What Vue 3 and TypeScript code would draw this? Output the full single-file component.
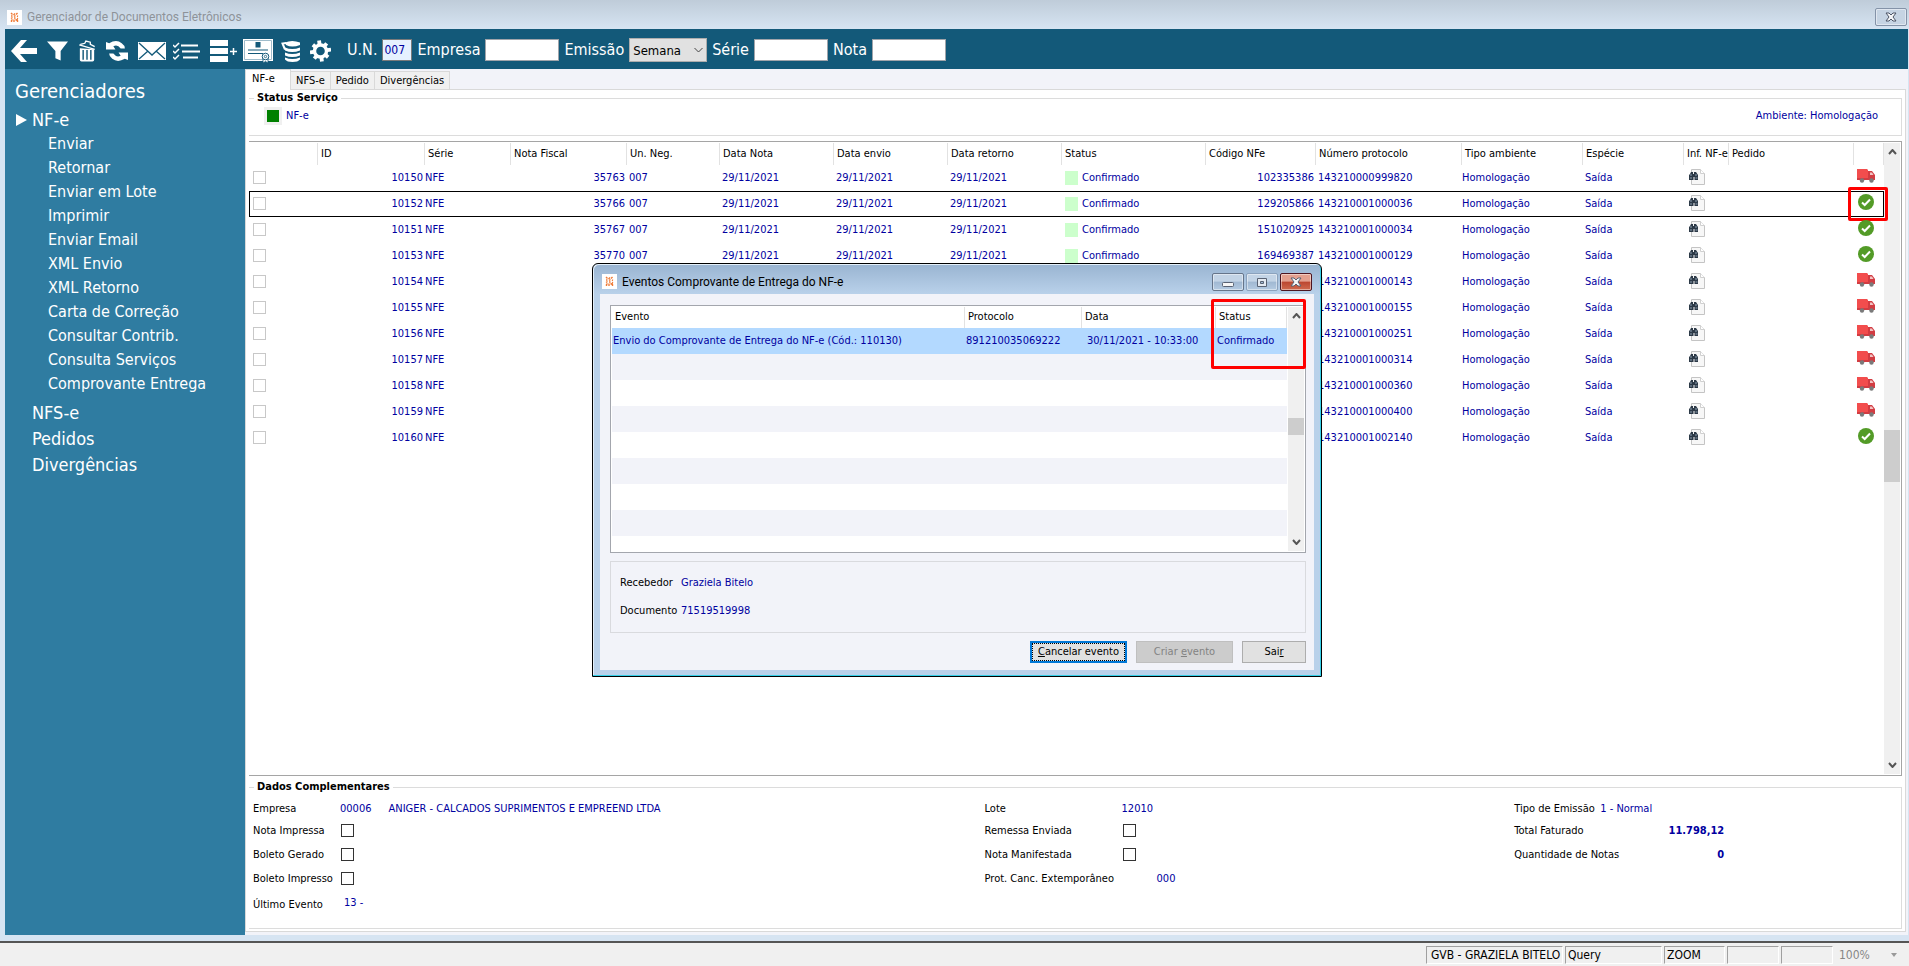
<script setup lang="ts">
import { ref } from 'vue'

interface Column {
  key: string
  label: string
  width: number | null
}

interface Invoice {
  id: number
  protocol: string
  delivered: boolean
  note?: number
  unit?: string
  date?: string
  status?: string
  code?: string
}

const columns: Column[] = [
  { key: 'check', label: '', width: 69 },
  { key: 'id', label: 'ID', width: 107 },
  { key: 'serie', label: 'Série', width: 86 },
  { key: 'note', label: 'Nota Fiscal', width: 116 },
  { key: 'unit', label: 'Un. Neg.', width: 93 },
  { key: 'date', label: 'Data Nota', width: 114 },
  { key: 'sent', label: 'Data envio', width: 114 },
  { key: 'back', label: 'Data retorno', width: 114 },
  { key: 'status', label: 'Status', width: 144 },
  { key: 'code', label: 'Código NFe', width: 110 },
  { key: 'protocol', label: 'Número protocolo', width: 146 },
  { key: 'env', label: 'Tipo ambiente', width: 121 },
  { key: 'kind', label: 'Espécie', width: 101 },
  { key: 'info', label: 'Inf. NF-e', width: 45 },
  { key: 'order', label: 'Pedido', width: null },
  { key: 'delivery', label: '', width: 30 },
]

const eventColumns: Column[] = [
  { key: 'event', label: 'Evento', width: null },
  { key: 'protocol', label: 'Protocolo', width: 117 },
  { key: 'date', label: 'Data', width: 134 },
  { key: 'status', label: 'Status', width: 71 },
]

const issued = { unit: '007', date: '29/11/2021', status: 'Confirmado' }

const invoices: Invoice[] = [
  { id: 10150, note: 35763, code: '102335386', protocol: '143210000999820', delivered: false, ...issued },
  { id: 10152, note: 35766, code: '129205866', protocol: '143210001000036', delivered: true, ...issued },
  { id: 10151, note: 35767, code: '151020925', protocol: '143210001000034', delivered: true, ...issued },
  { id: 10153, note: 35770, code: '169469387', protocol: '143210001000129', delivered: true, ...issued },
  { id: 10154, protocol: '143210001000143', delivered: false },
  { id: 10155, protocol: '143210001000155', delivered: false },
  { id: 10156, protocol: '143210001000251', delivered: false },
  { id: 10157, protocol: '143210001000314', delivered: false },
  { id: 10158, protocol: '143210001000360', delivered: false },
  { id: 10159, protocol: '143210001000400', delivered: false },
  { id: 10160, protocol: '143210001002140', delivered: true },
]

const selectedId = ref(10152)

const actions = [
  'Enviar',
  'Retornar',
  'Enviar em Lote',
  'Imprimir',
  'Enviar Email',
  'XML Envio',
  'XML Retorno',
  'Carta de Correção',
  'Consultar Contrib.',
  'Consulta Serviços',
  'Comprovante Entrega',
]
const managers = ['NFS-e', 'Pedidos', 'Divergências']
const tabs = ['NF-e', 'NFS-e', 'Pedido', 'Divergências']
const activeTab = ref('NF-e')

const unit = ref('007')
const company = ref('')
const period = ref('Semana')
const series = ref('')
const note = ref('')

function colStyle(c: Column) {
  return c.width === null ? undefined : { width: c.width + 'px' }
}
</script>

<template>
  <div class="desktop">
    <header class="titlebar">
      <svg class="logo" viewBox="0 0 15 15" aria-hidden="true">
        <rect width="15" height="15" fill="#fff" />
        <path d="M4 3l1.500 1.500M8 3.500L6.500 5M10.500 3L9 4.500M4 6h1.500M7 6.500L8.500 5.500M10 6l1 .5M4 8.500L5.500 7.500M7 8h1.500M10 8.500l1 .5M4.500 12v-1.500l1-1M7 12V9.500M8.500 9.500L10.500 10.500V12" fill="none" stroke="#ef7a35" stroke-width="1.400" />
      </svg>
      <h1>Gerenciador de Documentos Eletrônicos</h1>
      <button class="win-btn idle" type="button" aria-label="Fechar">
        <svg viewBox="0 0 12 10"><path d="M1 1h3l2 2 2-2h3L8 5l3 4H8L6 7 4 9H1l3-4z" fill="#f4f6f8" stroke="#4d5566" /></svg>
      </button>
    </header>

    <div class="toolbar">
      <div class="tools">
        <button type="button" class="tool back" aria-label="Voltar">
          <svg viewBox="0 0 26 22"><path d="M0 11L10 0h6L9 8h17v6H9l7 8h-6z" /></svg>
        </button>
        <button type="button" class="tool" aria-label="Filtrar">
          <svg viewBox="0 0 20 18"><path d="M0 0h20l-7 9v9l-5-2V9z" /></svg>
        </button>
        <button type="button" class="tool trash" aria-label="Excluir">
          <svg viewBox="0 0 16 20">
            <path d="M2 4l4-1 1-2 4 1v2l4 2M1 4.500l14 4" fill="none" stroke="#fff" stroke-width="1.200" />
            <path d="M1.500 7.500l13 1V18q0 1.500-1.500 1.500H3q-1.500 0-1.500-1.500z" />
            <path d="M4.500 9v9M8 9v9M11.500 9v9" stroke="#135979" stroke-width="1.300" />
          </svg>
        </button>
        <button type="button" class="tool refresh" aria-label="Atualizar">
          <svg viewBox="0 0 21 19">
            <path d="M0 1l3 1q7-4 12 0 3 2 3 5h-4q-3-4-7-2l2 3H0z" />
            <path d="M21 18l-3-1q-7 4-12 0-3-2-3-5h4q3 4 7 2l-2-3h9z" />
          </svg>
        </button>
        <button type="button" class="tool mail" aria-label="Email">
          <svg viewBox="0 0 28 18">
            <path d="M0 0h28v18H0z" />
            <path d="M1 1l13 12L27 1M1 17l9-8M27 17l-9-8" fill="none" stroke="#135979" stroke-width="1.300" />
          </svg>
        </button>
        <button type="button" class="tool list" aria-label="Lista">
          <svg viewBox="0 0 27 18" fill="none">
            <path d="M8 3.500h17M9 9.500h18M10 15.500h15" stroke="#fff" stroke-width="2" />
            <path d="M0 3l2 2 4-4M0 9l2 2 4-4M0 15l2 2 4-4" stroke="#fff" stroke-width="1.500" fill="none" />
          </svg>
        </button>
        <button type="button" class="tool rows" aria-label="Adicionar">
          <svg viewBox="0 0 27 22">
            <path d="M0 0h18v6H0zM0 8h18v6H0zM0 16h18v6H0z" />
            <path d="M20 11.500h7M23.500 8v7" stroke="#fff" stroke-width="1.500" />
          </svg>
        </button>
        <button type="button" class="tool cert" aria-label="Certificado">
          <svg viewBox="0 0 30 24">
            <path d="M0 0h30v22H0z" />
            <path d="M1.500 1.500h27v19h-27z" fill="none" stroke="#9fbccb" />
            <path d="M12.500 3h5v5.500h-5zM5 10.500h20v1H5zM5 14h15v1H5z" fill="#135979" />
            <path d="M20 19v5l2.500-1.500L25 24v-5" stroke="#135979" stroke-width=".8" />
            <circle cx="22.500" cy="17.500" r="3.300" stroke="#135979" />
            <circle cx="22.500" cy="17.500" r="1.200" fill="#fff" stroke="#135979" stroke-width=".8" />
          </svg>
        </button>
        <button type="button" class="tool db" aria-label="Banco de dados">
          <svg viewBox="0 0 21 22">
            <path d="M4 2.500Q11-.5 19 2.500V5Q11 8 5 5z" />
            <path d="M5 3L1.500 3.500 4 9.500" fill="none" stroke="#fff" stroke-width="2" />
            <path d="M4 7.500q7 3 15 0v3q-8 3-15 0zM4 12.500q7 3 15 0v3q-8 3-15 0zM4 17.500q7 3 15 0v2q-2 2.500-7.500 2.500T4 19.500z" />
          </svg>
        </button>
        <button type="button" class="tool gear" aria-label="Configurações">
          <svg viewBox="0 0 22 22">
            <circle cx="11" cy="11" r="6.300" fill="none" stroke="#fff" stroke-width="3.600" />
            <path d="M9.500 0l.5 4M12.500 22l-.5-4M0 12.500l4-.5M22 9.500l-4 .5M3 4.500L6 7M16 15l3 2.500M4.500 19L7 16M15 6l2.500-3" stroke="#fff" stroke-width="4" />
          </svg>
        </button>
      </div>
      <form class="filters" @submit.prevent>
        <label for="f-unit">U.N.</label>
        <input id="f-unit" v-model="unit" class="unit" type="text" />
        <label for="f-company">Empresa</label>
        <input id="f-company" v-model="company" type="text" />
        <label for="f-period">Emissão</label>
        <span class="select-wrap">
          <select id="f-period" v-model="period">
            <option>Semana</option>
            <option>Mês</option>
          </select>
          <svg viewBox="0 0 9 6" aria-hidden="true"><path d="M.5 1l4 4 4-4" fill="none" stroke="#444" /></svg>
        </span>
        <label for="f-series">Série</label>
        <input id="f-series" v-model="series" type="text" />
        <label for="f-note">Nota</label>
        <input id="f-note" v-model="note" type="text" />
      </form>
    </div>

    <div class="workspace">
      <nav class="sidebar">
        <h2>Gerenciadores</h2>
        <a class="group open" href="#">NF-e</a>
        <ul>
          <li v-for="a in actions" :key="a"><a href="#">{{ a }}</a></li>
        </ul>
        <a v-for="m in managers" :key="m" class="group" href="#">{{ m }}</a>
      </nav>

      <main class="content">
        <div class="tabs" role="tablist">
          <button
            v-for="t in tabs"
            :key="t"
            type="button"
            role="tab"
            class="tab"
            :class="{ active: t === activeTab }"
            :aria-selected="t === activeTab"
            @click="activeTab = t"
          >{{ t }}</button>
        </div>

        <div class="panel">
          <fieldset class="service">
            <legend>Status Serviço</legend>
            <div class="service-row">
              <span class="lamp"></span>
              <span>NF-e</span>
              <span class="ambient">Ambiente: Homologação</span>
            </div>
          </fieldset>

          <section class="grid">
            <div class="grid-body">
              <table>
                <colgroup>
                  <col v-for="c in columns" :key="c.key" :style="colStyle(c)" />
                </colgroup>
                <thead>
                  <tr>
                    <th v-for="c in columns" :key="c.key" scope="col"><div>{{ c.label }}</div></th>
                  </tr>
                </thead>
                <tbody>
                  <tr
                    v-for="r in invoices"
                    :key="r.id"
                    :class="{ selected: r.id === selectedId }"
                    @click="selectedId = r.id"
                  >
                    <td><input type="checkbox" :aria-label="'Selecionar ' + r.id" /></td>
                    <td class="num">{{ r.id }}</td>
                    <td>NFE</td>
                    <td class="num">{{ r.note }}</td>
                    <td class="pad">{{ r.unit }}</td>
                    <td class="pad">{{ r.date }}</td>
                    <td class="pad">{{ r.date }}</td>
                    <td class="pad">{{ r.date }}</td>
                    <td><span v-if="r.status" class="state"><i class="swatch"></i>{{ r.status }}</span></td>
                    <td class="num">{{ r.code }}</td>
                    <td class="pad">{{ r.protocol }}</td>
                    <td>Homologação</td>
                    <td class="pad">Saída</td>
                    <td>
                      <svg class="doc" viewBox="0 0 16 16" aria-hidden="true">
                        <path d="M2.500 .5h9l4 4v11h-13z" fill="#f7f7f7" stroke="#c4c4c4" />
                        <path d="M11.500 .5v4h4" fill="#fff" stroke="#d0d0d0" />
                        <path d="M1 5l1-2h2v2h1V3h2l2 3v5H5.500V8h-1v3H0V6z" fill="#2c3947" />
                        <path d="M1 9h2M6.500 9h2M2 5v2M7 5v2" stroke="#8ca0b2" />
                      </svg>
                    </td>
                    <td></td>
                    <td class="delivery">
                      <svg v-if="r.delivered" class="check" viewBox="0 0 16 16" aria-hidden="true">
                        <circle cx="8" cy="8" r="8" fill="#539b27" />
                        <path d="M4 8.500L6.700 11 12 5.500" fill="none" stroke="#fff" stroke-width="2" />
                      </svg>
                      <svg v-else class="truck" viewBox="0 0 18 14" aria-hidden="true">
                        <path d="M0 0h10l1 1v9H0z" fill="#f24d4d" />
                        <path d="M11 2h4l3 4v5h-7zM0 9h11v2H0z" fill="#d23c42" />
                        <path d="M13 3.500h2l1.500 2.500H13z" fill="#f3c3c3" />
                        <circle cx="5" cy="11.500" r="2.200" fill="#7a7a7a" />
                        <circle cx="14.500" cy="11.500" r="2.200" fill="#7a7a7a" />
                      </svg>
                      <span v-if="r.id === 10152" class="mark"></span>
                    </td>
                  </tr>
                </tbody>
              </table>
            </div>
            <div class="scroll" aria-hidden="true">
              <svg viewBox="0 0 9 6"><path d="M1 5l3.500-4L8 5" fill="none" stroke="#555" stroke-width="2" /></svg>
              <span class="thumb"></span>
              <svg viewBox="0 0 9 6"><path d="M1 1l3.500 4L8 1" fill="none" stroke="#555" stroke-width="2" /></svg>
            </div>
          </section>

          <fieldset class="extra">
            <legend>Dados Complementares</legend>
            <div class="cols">
              <div class="fields first">
                <span>Empresa</span><span class="val">00006<span class="name">ANIGER - CALCADOS SUPRIMENTOS E EMPREEND LTDA</span></span>
                <label for="c1">Nota Impressa</label><input id="c1" type="checkbox" />
                <label for="c2">Boleto Gerado</label><input id="c2" type="checkbox" />
                <label for="c3">Boleto Impresso</label><input id="c3" type="checkbox" />
                <span>Último Evento</span><span class="val event">13 -</span>
              </div>
              <div class="fields second">
                <span>Lote</span><span class="val">12010</span>
                <label for="c4">Remessa Enviada</label><input id="c4" type="checkbox" />
                <label for="c5">Nota Manifestada</label><input id="c5" type="checkbox" />
                <span>Prot. Canc. Extemporâneo</span><span class="val prot">000</span>
              </div>
              <div class="fields third">
                <span>Tipo de Emissão</span><span class="val">1 - Normal</span>
                <span>Total Faturado</span><b class="val">11.798,12</b>
                <span>Quantidade de Notas</span><b class="val">0</b>
              </div>
            </div>
          </fieldset>
        </div>
      </main>
    </div>

    <footer class="statusbar">
      <span class="cell user">GVB - GRAZIELA BITELO</span>
      <span class="cell query">Query</span>
      <span class="cell zoom">ZOOM</span>
      <span class="cell blank"></span>
      <span class="cell blank"></span>
      <span class="percent">100%</span>
      <svg viewBox="0 0 6 4" aria-hidden="true"><path d="M0 0h6L3 4z" fill="#999" /></svg>
    </footer>

    <section class="dialog" role="dialog" aria-labelledby="dlg-title">
      <div class="dialog-title">
        <svg class="logo" viewBox="0 0 15 15" aria-hidden="true">
          <rect width="15" height="15" fill="#fff" />
          <path d="M4 3l1.500 1.500M8 3.500L6.500 5M10.500 3L9 4.500M4 6h1.500M7 6.500L8.500 5.500M10 6l1 .5M4 8.500L5.500 7.500M7 8h1.500M10 8.500l1 .5M4.500 12v-1.500l1-1M7 12V9.500M8.500 9.500L10.500 10.500V12" fill="none" stroke="#ef7a35" stroke-width="1.400" />
        </svg>
        <h2 id="dlg-title">Eventos Comprovante de Entrega do NF-e</h2>
        <button class="win-btn" type="button" aria-label="Minimizar">
          <svg viewBox="0 0 12 10"><rect x=".5" y="5.500" width="11" height="4" rx="1" fill="#f6f6f6" stroke="#596273" /></svg>
        </button>
        <button class="win-btn soft" type="button" aria-label="Maximizar">
          <svg viewBox="0 0 12 10"><path d="M1.500 1.500h9v8h-9zM4.500 4.500v2h3v-2z" fill="#e4eaf1" fill-rule="evenodd" stroke="#596273" /></svg>
        </button>
        <button class="win-btn close" type="button" aria-label="Fechar">
          <svg viewBox="0 0 12 10"><path d="M1 1h3l2 2 2-2h3L8 5l3 4H8L6 7 4 9H1l3-4z" fill="#f4f6f8" stroke="#596273" /></svg>
        </button>
      </div>
      <div class="dialog-body">
        <div class="events">
          <div class="event-body">
            <table>
              <colgroup>
                <col v-for="c in eventColumns" :key="c.key" :style="colStyle(c)" />
              </colgroup>
              <thead>
                <tr>
                  <th v-for="c in eventColumns" :key="c.key" scope="col"><div>{{ c.label }}</div></th>
                </tr>
              </thead>
              <tbody>
                <tr class="current">
                  <td>Envio do Comprovante de Entrega do NF-e (Cód.: 110130)</td>
                  <td>891210035069222</td>
                  <td class="when">30/11/2021 - 10:33:00</td>
                  <td>Confirmado</td>
                </tr>
              </tbody>
            </table>
          </div>
          <div class="scroll" aria-hidden="true">
            <svg viewBox="0 0 9 6"><path d="M1 5l3.500-4L8 5" fill="none" stroke="#555" stroke-width="2" /></svg>
            <span class="thumb"></span>
            <svg viewBox="0 0 9 6"><path d="M1 1l3.500 4L8 1" fill="none" stroke="#555" stroke-width="2" /></svg>
          </div>
          <span class="mark"></span>
        </div>
        <dl class="receiver">
          <dt>Recebedor</dt><dd>Graziela Bitelo</dd>
          <dt>Documento</dt><dd>71519519998</dd>
        </dl>
        <div class="buttons">
          <button type="button" class="btn primary"><span><u>C</u>ancelar evento</span></button>
          <button type="button" class="btn" disabled><span>Criar <u>e</u>vento</span></button>
          <button type="button" class="btn small"><span>Sai<u>r</u></span></button>
        </div>
      </div>
    </section>
  </div>
</template>

<style>
body {
  margin: 0;
  background: #d6e4f2;
}
</style>

<style scoped>
* {
  box-sizing: border-box;
}

.desktop {
  position: relative;
  display: flex;
  flex-direction: column;
  min-height: 100vh;
  background: #d6e4f2;
  font-family: "DejaVu Sans Condensed", "Noto Sans", sans-serif;
  font-size: 11px;
  line-height: 14px;
  color: #000;
}

h1,
h2 {
  margin: 0;
  font-weight: 400;
}

button,
input,
select {
  font-family: inherit;
}

a {
  color: inherit;
  text-decoration: none;
}

.titlebar {
  display: flex;
  align-items: center;
  height: 29px;
  padding: 5px 2px 0 7px;
  background: linear-gradient(#bfccd9, #d6e4f2);
}

.titlebar h1 {
  flex: 1;
  margin-left: 5px;
  font: 12px/16px Roboto, "Noto Sans", sans-serif;
  color: #8e9399;
}

.logo {
  width: 15px;
  height: 15px;
}

.win-btn {
  display: flex;
  align-items: center;
  justify-content: center;
  width: 32px;
  height: 18px;
  padding: 0;
  border: 1px solid #66758a;
  border-radius: 2px;
  background: linear-gradient(#c3d4e6 45%, #a0b8d2 50%, #b5cbe2);
  box-shadow: inset 0 0 0 1px rgba(255, 255, 255, 0.45);
}

.win-btn svg {
  width: 12px;
  height: 10px;
}

.win-btn.idle {
  border-color: #8493a8;
  background: #c6d4e3;
}

.win-btn.soft {
  border-color: #8ba2bd;
}

.win-btn.close {
  border-color: #4d1520;
  background: linear-gradient(#e3a08f 45%, #bb4630 50%, #cf6a4f);
}

.toolbar {
  display: flex;
  align-items: center;
  gap: 16px;
  height: 40px;
  margin: 0 1px 0 5px;
  padding: 4px 0 0 6px;
  background: #135979;
}

.tools {
  display: flex;
  align-items: center;
  gap: 10px;
}

.tool {
  width: 21px;
  height: 22px;
  padding: 0;
  border: 0;
  background: none;
}

.tool svg {
  display: block;
  width: 100%;
  height: 100%;
  fill: #fff;
}

.tool.back { width: 26px; }
.tool.trash { width: 18px; }
.tool.refresh { width: 22px; }
.tool.mail { width: 28px; }
.tool.list { width: 27px; margin-left: -3px; }
.tool.rows { width: 27px; }
.tool.cert { width: 30px; height: 24px; margin-left: -4px; }
.tool.db { margin-left: -2px; }
.tool.gear { margin-left: -2px; }

.filters {
  display: flex;
  align-items: center;
  gap: 5px;
  margin-bottom: 2px;
}

.filters label {
  font-size: 16px;
  line-height: 20px;
  color: #fff;
}

.filters input {
  width: 74px;
  height: 22px;
  padding: 0 1px;
  border: 1px solid #a0a4aa;
  background: #fff;
  font-size: 12px;
  color: #0000a0;
}

.filters .unit {
  width: 30px;
  border-color: #7a7a7a;
  background: #e5f1ff;
}

.select-wrap {
  display: flex;
  align-items: center;
  position: relative;
}

.select-wrap select {
  appearance: none;
  width: 78px;
  height: 24px;
  padding: 0 3px;
  border: 1px solid #adadad;
  border-radius: 0;
  background: #e1e1e1;
  font-size: 13px;
  color: #000;
}

.select-wrap svg {
  position: absolute;
  right: 4px;
  width: 9px;
  height: 6px;
  pointer-events: none;
}

.workspace {
  display: flex;
  flex: 1;
  margin: 0 1px 6px 5px;
}

.sidebar {
  width: 240px;
  padding: 10px 0 0 10px;
  background: #2f7ca1;
  color: #fff;
}

.sidebar h2 {
  margin-bottom: 5px;
  font-size: 20px;
  line-height: 24px;
}

.sidebar ul {
  margin: 0 0 4px;
  padding: 0;
  list-style: none;
}

.sidebar li {
  height: 24px;
  padding-left: 33px;
  font-size: 16px;
  line-height: 24px;
}

.group {
  display: flex;
  align-items: center;
  height: 26px;
  padding-left: 17px;
  font-size: 18px;
}

.group.open {
  height: 24px;
  padding-left: 0;
}

.group.open::before {
  content: "";
  margin: 0 5px 0 1px;
  border: 6px solid transparent;
  border-left: 11px solid #fff;
  border-right: 0;
}

.content {
  display: flex;
  flex: 1;
  flex-direction: column;
  min-width: 0;
  padding: 0 2px 3px 0;
  background: #f2f3f9;
}

.tabs {
  display: flex;
  align-items: flex-end;
  height: 21px;
}

.tab {
  height: 19px;
  margin-right: -1px;
  padding: 0 5px;
  border: 1px solid #d9d9d9;
  background: #f0f0f0;
  font-size: 11px;
  line-height: 14px;
  color: #000;
}

.tab.active {
  z-index: 1;
  width: 46px;
  height: 21px;
  padding: 0 6px 2px;
  border-bottom: 0;
  background: #fff;
  text-align: left;
}

.panel {
  display: flex;
  flex: 1;
  flex-direction: column;
  margin-top: -1px;
  padding: 2px 3px;
  border: 1px solid #d9d9d9;
  background: #fff;
}

fieldset {
  min-width: 0;
  margin: 0;
  border: 1px solid #dcdcdc;
  border-left: 0;
}

legend {
  margin-left: 5px;
  padding: 0 3px;
  font-weight: 700;
  line-height: 12px;
}

.service {
  height: 44px;
  padding: 0;
}

.service-row {
  display: flex;
  align-items: center;
  gap: 4px;
  padding: 3px 23px 0 15px;
  color: #0000a0;
}

.lamp {
  width: 18px;
  height: 18px;
  border: 3px solid #f0f0f0;
  background: #008000;
}

.ambient {
  margin-left: auto;
}

.grid {
  display: flex;
  flex: 1;
  margin: 5px 0;
  border: 1px solid #a5a5a5;
  border-left: 0;
}

.grid-body,
.event-body {
  flex: 1;
  min-width: 0;
}

table {
  width: 100%;
  border-collapse: collapse;
  table-layout: fixed;
}

th {
  height: 23px;
  padding: 1px 0 0;
  font-weight: 400;
  text-align: left;
  white-space: nowrap;
}

th div {
  height: 22px;
  padding-left: 3px;
  border-right: 1px solid #e2e2e2;
  line-height: 21px;
}

td {
  height: 26px;
  padding: 0;
  color: #0000a0;
  white-space: nowrap;
}

td.num {
  padding-right: 2px;
  text-align: right;
}

td.pad {
  padding-left: 2px;
}

tr.selected {
  outline: 1px solid #000;
  outline-offset: -1px;
}

input[type="checkbox"] {
  appearance: none;
  display: block;
  width: 13px;
  height: 13px;
  margin: 0 0 1px 4px;
  border: 1px solid #c8c8c8;
  background: #fff;
}

.state {
  display: flex;
  align-items: center;
  gap: 4px;
  padding-left: 3px;
}

.swatch {
  width: 13px;
  height: 14px;
  background: #ccffcc;
}

.doc {
  display: block;
  width: 16px;
  height: 16px;
  margin: 0 0 2px 5px;
}

.delivery {
  position: relative;
}

.check,
.truck {
  display: block;
  width: 16px;
  height: 16px;
  margin: 0 0 4px 4px;
}

.truck {
  width: 18px;
  height: 14px;
  margin-left: 3px;
}

.mark {
  position: absolute;
  border: 3px solid #f00;
  border-radius: 2px;
}

.delivery .mark {
  inset: -4px -4px -4px -6px;
}

.scroll {
  display: flex;
  flex-direction: column;
  align-items: center;
  width: 16px;
  margin: 1px 1px 1px 0;
  padding: 6px 0;
  background: #f0f0f0;
}

.scroll svg {
  width: 9px;
  height: 6px;
}

.thumb {
  width: 16px;
  height: 52px;
  margin: auto 0;
  background: #cdcdcd;
}

.grid .thumb {
  margin: 275px 0 auto;
}

.extra {
  height: 148px;
  padding: 0;
}

.cols {
  display: grid;
  grid-template-columns: 732fr 530fr 387fr;
  padding: 6px 0 0 4px;
}

.fields {
  display: grid;
  grid-template-columns: 87px 1fr;
  grid-template-rows: 20px 24px 24px 24px 28px;
  align-items: center;
  align-content: start;
}

.fields.second {
  grid-template-columns: 137px 1fr;
}

.fields.third {
  grid-template-columns: 86px 124px;
}

.fields > span,
.fields > label,
.fields > b {
  white-space: nowrap;
}

.fields input {
  margin: 0 0 2px 1px;
  border-color: #333;
}

.fields b {
  text-align: right;
}

.val {
  color: #0000a0;
}

.name {
  margin-left: 17px;
}

.val.event {
  padding: 0 0 4px 4px;
}

.val.prot {
  padding-left: 35px;
}

.statusbar {
  display: flex;
  align-items: center;
  gap: 2px;
  height: 25px;
  padding: 0 12px 0 0;
  border-top: 2px solid #555;
  background: #f0f0f0;
  font-size: 12px;
}

.cell {
  height: 18px;
  padding-left: 4px;
  border: 1px solid #a0a0a0;
  border-color: #a0a0a0 #fff #fff #a0a0a0;
  line-height: 17px;
}

.cell.user { width: 137px; margin-left: auto; }
.cell.query { width: 97px; padding-left: 2px; }
.cell.zoom { width: 61px; padding-left: 2px; }
.cell.blank { width: 52px; }

.percent {
  width: 54px;
  padding-left: 4px;
  color: #868686;
}

.statusbar svg {
  width: 6px;
  height: 4px;
}

.dialog {
  position: absolute;
  top: 263px;
  left: 592px;
  width: 730px;
  padding: 0 7px 6px;
  border: 1px solid #000;
  border-radius: 6px 6px 0 0;
  background: linear-gradient(#99b4d1, #b9d1ea 30px);
  box-shadow: inset -1px -1px 0 #35d0e8, inset 1px 1px 0 #e4f0fa;
}

.dialog-title {
  display: flex;
  align-items: center;
  gap: 2px;
  height: 30px;
  padding: 5px 2px 0;
}

.dialog-title h2 {
  flex: 1;
  margin-left: 3px;
  font: 12px/16px Roboto, "Noto Sans", sans-serif;
}

.dialog-body {
  padding: 11px 8px 7px 10px;
  background: #f2f3f9;
}

.events {
  position: relative;
  display: flex;
  height: 248px;
  border: 1px solid #a3a6ad;
  background: #fff;
}

.event-body {
  margin: 0 1px 1px;
  background: repeating-linear-gradient(#fff 0 26px, #f2f3f9 26px 52px) 0 22px;
}

.events thead {
  background: #fff;
}

.events th {
  height: 22px;
}

.events th div {
  height: 21px;
  line-height: 20px;
}

.events td {
  padding-left: 1px;
}

.events td.when {
  padding-left: 5px;
}

.current {
  background: #b3d9ff;
}

.events .mark {
  top: -7px;
  right: -1px;
  width: 95px;
  height: 70px;
}

.events .thumb {
  height: 17px;
  margin: 99px 0 auto;
}

.receiver {
  display: grid;
  grid-template-columns: 61px 1fr;
  grid-template-rows: 28px 28px;
  align-items: center;
  height: 72px;
  margin: 8px 0;
  padding: 7px 9px;
  border: 1px solid #d9dade;
}

.receiver dd {
  margin: 0;
  color: #0000a0;
}

.buttons {
  display: flex;
  justify-content: flex-end;
  gap: 9px;
}

.btn {
  width: 97px;
  height: 22px;
  padding: 0;
  border: 1px solid #adadad;
  background: #e1e1e1;
  font-size: 11px;
  line-height: 14px;
  color: #000;
}

.btn.primary {
  border: 2px solid #0078d7;
}

.btn.primary span {
  display: block;
  height: 18px;
  border: 1px dotted #000;
  line-height: 16px;
}

.btn:disabled {
  border-color: #bfbfbf;
  background: #ccc;
  color: #838383;
}

.btn.small {
  width: 64px;
}
</style>
